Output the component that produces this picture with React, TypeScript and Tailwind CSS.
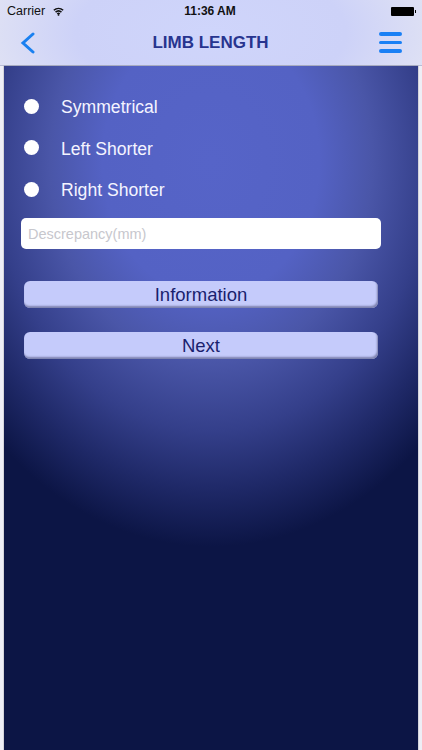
const options = ['Symmetrical', 'Left Shorter', 'Right Shorter']
const buttons = ['Information', 'Next']

const App = () => {
    return (
        <div className="w-[422px] h-[750px] flex flex-col overflow-hidden bg-[#eeeef6] font-['Liberation_Sans',sans-serif]">
            <div className="h-[66px] shrink-0 flex flex-col bg-[radial-gradient(ellipse_270px_130px_at_50%_50%,#cfd5fb_0%,#cdd2f8_50%,#e8e9f2_100%)] border-b border-[#b9bdd6]">
                <div className="h-[22px] flex items-center justify-between pl-[7px] pr-[6px] text-[#111]">
                    <div className="w-[100px] flex items-center gap-[8px]">
                        <span className="text-[12.5px]">Carrier</span>
                        <svg width="11" height="9" viewBox="0 0 13 10" fill="none" stroke="#111" strokeWidth="1.8">
                            <path d="M1 3.6C4.2 .6 8.8 .6 12 3.6" />
                            <path d="M3 5.8C5 4 8 4 10 5.8" />
                            <path d="M5 7.8C5.9 7 7.1 7 8 7.8" />
                            <circle cx="6.5" cy="9" r="1" fill="#111" stroke="none" />
                        </svg>
                    </div>
                    <span className="font-bold text-[12px]">11:36 AM</span>
                    <div className="w-[103px] flex justify-end items-center">
                        <div className="w-[23px] h-[9px] bg-black rounded-[1px]"></div>
                        <div className="w-[1px] h-[3px] ml-[1px] bg-black"></div>
                    </div>
                </div>
                <div className="flex-1 flex items-center justify-between pl-[20px] pr-[20px] pb-[2px]">
                    <svg width="15" height="22" viewBox="0 0 15 22" fill="none" stroke="#1a80f0" strokeWidth="3" strokeLinecap="round">
                        <path d="M13 2 3 11l10 9" />
                    </svg>
                    <h1 className="ml-[7px] text-[#27348f] text-[17px] font-bold">LIMB LENGTH</h1>
                    <div className="w-[23px] flex flex-col gap-[5px]">
                        <div className="h-[3.5px] rounded-full bg-[#1a80f5]"></div>
                        <div className="h-[3.5px] rounded-full bg-[#1a80f5]"></div>
                        <div className="h-[3.5px] rounded-full bg-[#1a80f5]"></div>
                    </div>
                </div>
            </div>

            <div className="flex-1 mx-1 shadow-[0_0_1px_#555] bg-[radial-gradient(ellipse_310px_385px_at_50%_14%,#5664c8_0%,#5462c4_35%,#4a56a8_52%,#343f8a_70%,#1f2968_85%,#0c1545_100%)]">
                <div className="pt-[31px] flex flex-col gap-[20.5px]">
                    {options.map((option) => (
                        <div key={option} className="h-[21px] flex items-center">
                            <div className="w-[15px] h-[15px] rounded-full bg-white ml-[20px] mb-[3px]"></div>
                            <span className="ml-[22px] text-[#f4f4ff] text-[17.6px]">{option}</span>
                        </div>
                    ))}
                </div>
                <input
                    className="block mt-[17px] ml-[17px] w-[360px] h-[31px] rounded-[5px] bg-white px-[7px] text-[14.5px] outline-none placeholder:text-[#c7c7cd]"
                    placeholder="Descrepancy(mm)"
                />
                <div className="mt-[32px] ml-[20px] w-[354px] flex flex-col gap-[24px]">
                    {buttons.map((label) => (
                        <button
                            key={label}
                            className="h-[27px] rounded-[6px] bg-[#c5cbfb] text-[#1a1f6e] text-[18.5px] shadow-[inset_-1px_-2px_2px_#7d82ae]"
                        >
                            {label}
                        </button>
                    ))}
                </div>
            </div>
        </div>
    )
}

export default App
